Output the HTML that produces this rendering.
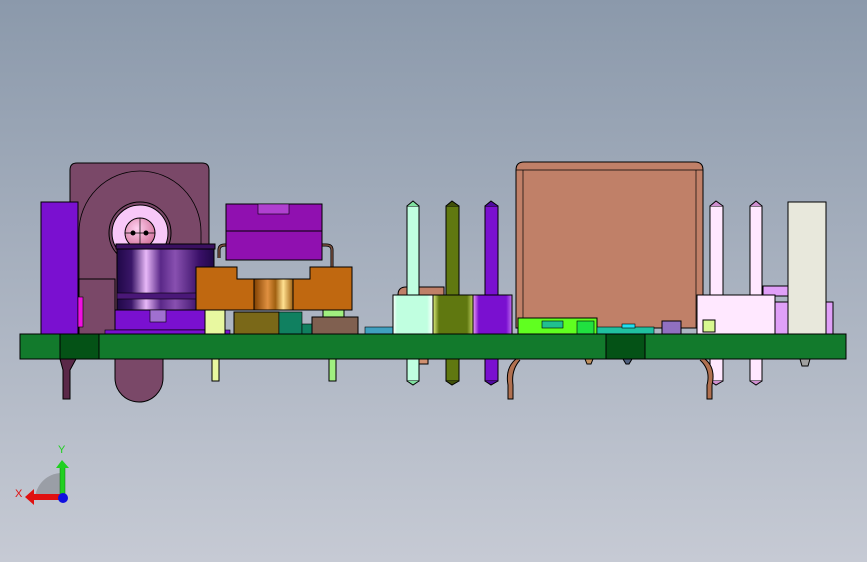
<!DOCTYPE html>
<html><head><meta charset="utf-8"><style>
html,body{margin:0;padding:0;width:867px;height:562px;overflow:hidden}
svg{display:block}
</style></head><body>
<svg width="867" height="562" viewBox="0 0 867 562" xmlns="http://www.w3.org/2000/svg" font-family="Liberation Sans, sans-serif">
<defs>
<linearGradient id="bg" x1="0" y1="0" x2="0" y2="1"><stop offset="0" stop-color="#8b99ab"/><stop offset="1" stop-color="#c6cad4"/></linearGradient>
<linearGradient id="cap" x1="0" y1="0" x2="1" y2="0"><stop offset="0" stop-color="#200848"/><stop offset="0.15" stop-color="#3a1668"/><stop offset="0.3" stop-color="#e8b8f8"/><stop offset="0.45" stop-color="#5a2888"/><stop offset="0.6" stop-color="#8850b0"/><stop offset="0.85" stop-color="#3a1068"/><stop offset="1" stop-color="#200848"/></linearGradient>
<linearGradient id="cu" x1="0" y1="0" x2="1" y2="0"><stop offset="0" stop-color="#804000"/><stop offset="0.35" stop-color="#e09040"/><stop offset="0.55" stop-color="#a06010"/><stop offset="0.75" stop-color="#ffe090"/><stop offset="1" stop-color="#a06010"/></linearGradient>
<linearGradient id="mint" x1="0" y1="0" x2="1" y2="0"><stop offset="0" stop-color="#ffffff"/><stop offset="0.1" stop-color="#c0ffe0"/><stop offset="0.85" stop-color="#c0ffe0"/><stop offset="1" stop-color="#ffffff"/></linearGradient>
<linearGradient id="ol" x1="0" y1="0" x2="1" y2="0"><stop offset="0" stop-color="#e0f080"/><stop offset="0.15" stop-color="#607810"/><stop offset="0.85" stop-color="#607810"/><stop offset="1" stop-color="#c0d060"/></linearGradient>
<linearGradient id="pu" x1="0" y1="0" x2="1" y2="0"><stop offset="0" stop-color="#f0a0f8"/><stop offset="0.15" stop-color="#7a10d0"/><stop offset="0.85" stop-color="#7a10d0"/><stop offset="1" stop-color="#c070f0"/></linearGradient>
<radialGradient id="ball" cx="0.4" cy="0.35" r="0.7"><stop offset="0" stop-color="#ffd0f0"/><stop offset="1" stop-color="#d07098"/></radialGradient>
</defs>
<rect width="867" height="562" fill="url(#bg)"/>
<g stroke="#000" stroke-width="1">
<!-- maroon jack -->
<path d="M70 170 Q70 163 77 163 L202 163 Q209 163 209 170 L209 334 L70 334 Z" fill="#7a4868"/>
<path d="M79 334 L79 232 A61 61 0 0 1 201 232 L201 334" fill="none" stroke-width="0.8"/>
<circle cx="140" cy="233" r="31" fill="#7a4868"/>
<circle cx="140" cy="233" r="28" fill="#f8c8f8"/>
<circle cx="140" cy="233" r="15" fill="url(#ball)"/>
<path d="M125 233 H155 M140 218 V248" stroke-width="0.7"/>
<circle cx="133" cy="233" r="2" fill="#000"/><circle cx="146" cy="233" r="2" fill="#000"/>
<rect x="79" y="279" width="36" height="55" fill="#7a4868"/>
<!-- below pcb left -->
<path d="M115 359 L163 359 L163 378 A24 24 0 0 1 115 378 Z" fill="#7a4868"/>
<path d="M60 359 L76 359 L70 370 L70 399 L63 399 L63 370 Z" fill="#5a2848"/>
<!-- purple left block -->
<rect x="41" y="202" width="37" height="132" fill="#7a10d0"/>
<rect x="78" y="297" width="5" height="30" fill="#f010e0" stroke-width="0.6"/>
<!-- capacitor -->
<rect x="117" y="246" width="97" height="66" fill="url(#cap)"/>
<rect x="116" y="244" width="99" height="5" fill="#3a1060"/>
<rect x="117" y="293" width="97" height="6" fill="#4a1878" stroke-width="0.6"/>
<rect x="115" y="310" width="90" height="20" fill="#7a10d0"/>
<rect x="150" y="310" width="16" height="12" fill="#a070d0" stroke-width="0.6"/>
<rect x="105" y="330" width="125" height="4" fill="#7a10d0" stroke-width="0.6"/>
<!-- relay & legs -->
<path d="M219 258 V250 Q219 245 225 245 L229 245 M322 245 L326 245 Q332 245 332 250 V268" fill="none" stroke="#000" stroke-width="3"/>
<path d="M219 258 V250 Q219 245 225 245 L229 245 M322 245 L326 245 Q332 245 332 250 V268" fill="none" stroke="#7a5040" stroke-width="1.5"/>
<rect x="226" y="204" width="96" height="56" fill="#9010b0"/>
<line x1="226" y1="231" x2="322" y2="231"/>
<rect x="258" y="204" width="31" height="10" fill="#b040d0" stroke-width="0.6"/>
<path d="M196 267 H237 V279 H310 V267 H352 V310 H196 Z" fill="#c06810"/>
<rect x="254" y="279" width="39" height="31" fill="url(#cu)"/>
<!-- small smd -->
<rect x="205" y="310" width="20" height="24" fill="#e8f8a0"/>
<rect x="212" y="359" width="7" height="22" fill="#e8f8a0"/>
<rect x="323" y="310" width="21" height="24" fill="#a0f080"/>
<rect x="329" y="359" width="7" height="22" fill="#a0f080"/>
<rect x="234" y="312" width="45" height="22" fill="#7a6818"/>
<rect x="279" y="312" width="23" height="22" fill="#108060" stroke-width="0.6"/>
<rect x="302" y="324" width="10" height="10" fill="#108060" stroke-width="0.6"/>
<rect x="312" y="317" width="46" height="17" fill="#806050"/>
<rect x="365" y="327" width="28" height="7" fill="#40a0c0" stroke-width="0.6"/>
<!-- header left -->
<path d="M398 295 Q398 287 406 287 L444 287 L444 295 Z" fill="#c08068"/>
<rect x="418" y="359" width="10" height="5" fill="#d09070"/>
<rect x="407" y="206" width="12" height="175" fill="#c0ffe0"/>
<path d="M407 206 L413 201 L419 206 M407 381 L413 385 L419 381" fill="#80e0a0"/>
<rect x="446" y="206" width="13" height="175" fill="#607810"/>
<path d="M446 206 L452 201 L459 206 M446 381 L452 385 L459 381" fill="#405008"/>
<rect x="485" y="206" width="13" height="175" fill="#7a10d0"/>
<path d="M485 206 L491 201 L498 206 M485 381 L491 385 L498 381" fill="#5008a0"/>
<rect x="393" y="295" width="40" height="39" fill="url(#mint)"/>
<rect x="433" y="295" width="40" height="39" fill="url(#ol)"/>
<rect x="473" y="295" width="39" height="39" fill="url(#pu)"/>
<!-- big box -->
<path d="M516 170 Q516 162 524 162 L695 162 Q703 162 703 170 L703 328 L516 328 Z" fill="#c08068"/>
<line x1="523" y1="170" x2="523" y2="328" stroke-width="0.7"/>
<line x1="696" y1="170" x2="696" y2="328" stroke-width="0.7"/>
<line x1="516" y1="170" x2="703" y2="170" stroke-width="0.7"/>
<rect x="518" y="318" width="79" height="16" fill="#60ff20"/>
<rect x="542" y="321" width="21" height="7" fill="#20c090" stroke-width="0.6"/>
<rect x="577" y="321" width="17" height="13" fill="#20e040" stroke-width="0.6"/>
<rect x="597" y="327" width="57" height="7" fill="#20c0a0" stroke-width="0.6"/>
<rect x="662" y="321" width="19" height="13" fill="#9070c0"/>
<rect x="622" y="324" width="13" height="4" fill="#20e0f0" stroke-width="0.6"/>
<!-- right header -->
<rect x="710" y="206" width="13" height="175" fill="#ffe8ff"/>
<path d="M710 206 L716 201 L723 206 M710 381 L716 385 L723 381" fill="#d090d0"/>
<rect x="750" y="206" width="12" height="175" fill="#ffe8ff"/>
<path d="M750 206 L756 201 L762 206 M750 381 L756 385 L762 381" fill="#d090d0"/>
<rect x="763" y="286" width="27" height="10" fill="#e0a0f8"/>
<rect x="763" y="302" width="70" height="32" fill="#e0a0f8"/>
<rect x="697" y="295" width="78" height="39" fill="#ffe8ff"/>
<rect x="703" y="320" width="12" height="12" fill="#d8f890"/>
<rect x="788" y="202" width="38" height="132" fill="#e8e8dc"/>
<!-- legs -->
<path d="M516 359 Q505 368 508 385 L508 399 L513 399 L513 385 Q511 370 520 360" fill="#b07050"/>
<path d="M705 359 Q716 368 712 385 L712 399 L707 399 L707 385 Q711 370 700 360" fill="#b07050"/>
<path d="M585 359 L593 359 L591 364 L587 364 Z" fill="#c09060"/>
<path d="M623 359 L632 359 L629 364 L626 364 Z" fill="#506080"/>
<path d="M800 359 L810 359 L808 366 L802 366 Z" fill="#a0a0a0"/>
<!-- PCB -->
<rect x="20" y="334" width="826" height="25" fill="#127a2c"/>
<rect x="60" y="334" width="39" height="25" fill="#045216"/>
<rect x="606" y="334" width="39" height="25" fill="#045216"/>
</g>
<!-- triad -->
<path d="M62 500 L35 500 A27 27 0 0 1 62 473 Z" fill="#9a9ea6"/>
<rect x="60" y="467" width="5" height="33" fill="#20d020" stroke="#107010" stroke-width="0.5"/>
<path d="M56 468 L62 460 L69 468 Z" fill="#20d020"/>
<rect x="33" y="494" width="29" height="6" fill="#e01010"/>
<path d="M34 489 L25 497 L34 505 Z" fill="#e01010"/>
<circle cx="63" cy="498" r="5" fill="#1010e0"/>
<text x="58" y="453" font-size="11" fill="#20d020">Y</text>
<text x="15" y="497" font-size="11" fill="#e01010">X</text>
</svg>
</body></html>
